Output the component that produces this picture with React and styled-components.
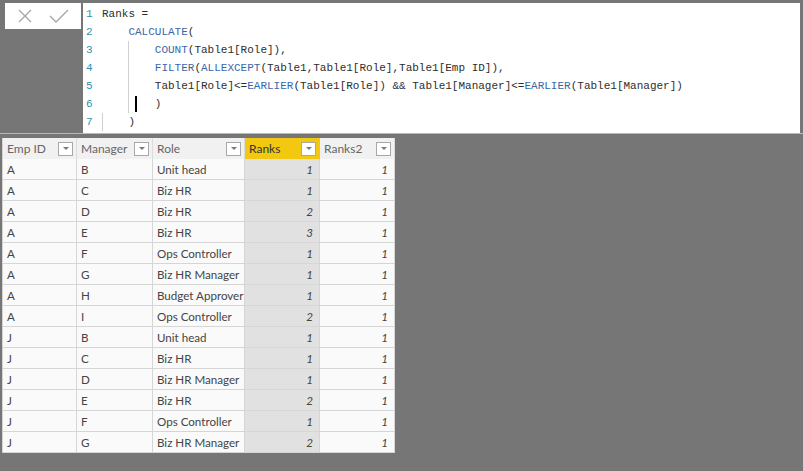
import React from "react";
import styled, { createGlobalStyle } from "styled-components";

const GlobalStyle = createGlobalStyle`
  html, body, #root {
    margin: 0;
    padding: 0;
    height: 100%;
  }
  body {
    background: #767676;
    font-family: "Lato", "Noto Sans", sans-serif;
  }
`

const Page = styled.div`
  min-height: 100vh;
  background: #767676;
  display: flex;
  flex-direction: column;
`

const FormulaBar = styled.div`
  display: flex;
  align-items: flex-start;
  gap: 2px;
  padding: 3px 3px 0 5px;
  border-bottom: 1px solid #b9b9b9;
`

const ActionBox = styled.div`
  width: 76px;
  height: 26px;
  background: #fff;
  display: flex;
  align-items: center;
  justify-content: space-around;
  padding: 0 4px;
  box-sizing: border-box;
`

const Editor = styled.div`
  flex: 1;
  height: 130px;
  background: #fff;
  padding-top: 2px;
  box-sizing: border-box;
  font-family: "Liberation Mono", "DejaVu Sans Mono", monospace;
  font-size: 11px;
  color: #2d2d2d;
`

const Line = styled.div`
  display: flex;
  height: 18px;
  line-height: 18px;
  white-space: pre;
`

const LineNo = styled.span`
  width: 16px;
  padding-left: 3px;
  color: #2b91af;
`

const Indent = styled.span`
  display: inline-block;
  width: 4ch;
  height: 18px;
  box-sizing: border-box;
  border-left: 1px solid ${(p) => (p.guide ? "#d0d0d0" : "transparent")};
  position: relative;
`

const Caret = styled.span`
  position: absolute;
  left: 6px;
  top: 1px;
  width: 2px;
  height: 16px;
  background: #000;
`

const Fn = styled.span`
  color: #3a67a8;
`

const TableArea = styled.div`
  padding: 4px 0 0 2px;
`

const Grid = styled.div`
  display: grid;
  grid-template-columns: 74px 76px 92px 75px 75px;
  width: max-content;
  background: #fafafa;
  border-left: 1px solid #d4d4d4;
`

const HeadCell = styled.div`
  height: 21px;
  box-sizing: border-box;
  display: flex;
  align-items: center;
  justify-content: space-between;
  padding: 0 3px 0 4px;
  background: ${(p) => (p.active ? "#f2c811" : "#f1f1f1")};
  color: ${(p) => (p.active ? "#333" : "#666")};
  font-size: 12px;
  white-space: nowrap;
  border-right: 1px solid ${(p) => (p.active ? "#f2c811" : "#dcdcdc")};
`

const Drop = styled.span`
  width: 15px;
  height: 14px;
  box-sizing: border-box;
  border: 1px solid #a8a8a8;
  background: #fff;
  display: flex;
  align-items: center;
  justify-content: center;
  &::after {
    content: "";
    border-left: 3px solid transparent;
    border-right: 3px solid transparent;
    border-top: 3px solid #7a7a7a;
  }
`

const Cell = styled.div`
  height: 21px;
  box-sizing: border-box;
  display: flex;
  align-items: center;
  justify-content: ${(p) => (p.num ? "flex-end" : "flex-start")};
  padding: ${(p) => (p.num ? "0 6px 0 0" : "0 0 0 4px")};
  border-right: 1px solid #d6d6d6;
  border-bottom: 1px solid #d6d6d6;
  background: ${(p) => (p.selected ? "#e1e1e1" : "#fafafa")};
  font-size: 11.6px;
  white-space: nowrap;
  overflow: hidden;
  font-style: ${(p) => (p.num ? "italic" : "normal")};
  color: #444;
`

const headers = ["Emp ID", "Manager", "Role", "Ranks", "Ranks2"];

const rows = [
  ["A", "B", "Unit head", 1, 1],
  ["A", "C", "Biz HR", 1, 1],
  ["A", "D", "Biz HR", 2, 1],
  ["A", "E", "Biz HR", 3, 1],
  ["A", "F", "Ops Controller", 1, 1],
  ["A", "G", "Biz HR Manager", 1, 1],
  ["A", "H", "Budget Approver", 1, 1],
  ["A", "I", "Ops Controller", 2, 1],
  ["J", "B", "Unit head", 1, 1],
  ["J", "C", "Biz HR", 1, 1],
  ["J", "D", "Biz HR Manager", 1, 1],
  ["J", "E", "Biz HR", 2, 1],
  ["J", "F", "Ops Controller", 1, 1],
  ["J", "G", "Biz HR Manager", 2, 1],
];

function CloseIcon() {
  return (
    <svg width="14" height="14" viewBox="0 0 14 14">
      <path d="M1 1 L13 13 M13 1 L1 13" stroke="#a5a5a5" strokeWidth="1.3" fill="none" />
    </svg>
  );
}

function CheckIcon() {
  return (
    <svg width="20" height="14" viewBox="0 0 20 14">
      <path d="M1 7 L7 13 L19 1" stroke="#a5a5a5" strokeWidth="1.3" fill="none" />
    </svg>
  );
}

function App() {
  return (
    <Page>
      <GlobalStyle />
      <FormulaBar>
        <ActionBox>
          <CloseIcon />
          <CheckIcon />
        </ActionBox>
        <Editor>
          <Line>
            <LineNo>1</LineNo>
            <span>Ranks =</span>
          </Line>
          <Line>
            <LineNo>2</LineNo>
            <Indent />
            <Fn>CALCULATE</Fn>(
          </Line>
          <Line>
            <LineNo>3</LineNo>
            <Indent />
            <Indent guide />
            <Fn>COUNT</Fn>(Table1[Role]),
          </Line>
          <Line>
            <LineNo>4</LineNo>
            <Indent />
            <Indent guide />
            <Fn>FILTER</Fn>(<Fn>ALLEXCEPT</Fn>(Table1,Table1[Role],Table1[Emp ID]),
          </Line>
          <Line>
            <LineNo>5</LineNo>
            <Indent />
            <Indent guide />
            Table1[Role]&lt;=<Fn>EARLIER</Fn>(Table1[Role]) &amp;&amp; Table1[Manager]&lt;=<Fn>EARLIER</Fn>(Table1[Manager])
          </Line>
          <Line>
            <LineNo>6</LineNo>
            <Indent />
            <Indent guide>
              <Caret />
            </Indent>
            )
          </Line>
          <Line>
            <LineNo>7</LineNo>
            <Indent guide />
            )
          </Line>
        </Editor>
      </FormulaBar>
      <TableArea>
        <Grid>
          {headers.map((h) => (
            <HeadCell key={h} active={h === "Ranks"}>
              {h}
              <Drop />
            </HeadCell>
          ))}
          {rows.map((r, i) =>
            r.map((v, j) => (
              <Cell key={i + "-" + j} num={j > 2} selected={j === 3}>
                {v}
              </Cell>
            ))
          )}
        </Grid>
      </TableArea>
    </Page>
  );
}

export default App;
